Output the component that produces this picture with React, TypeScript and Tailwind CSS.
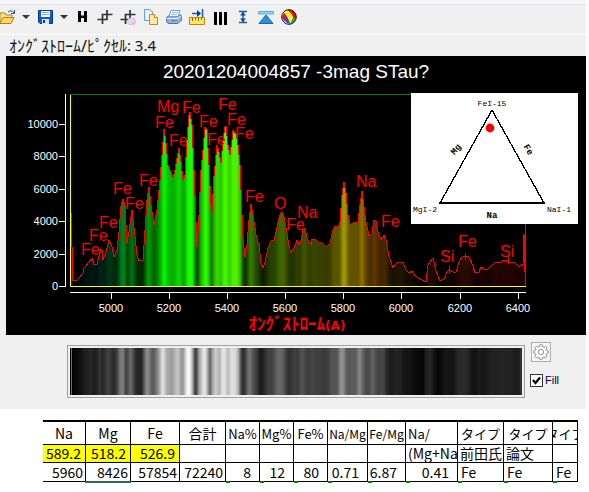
import type { ReactNode } from "react";

type Point = [number, number];

const BASELINE = 286;
const PEAK = 174;

const PROFILE: Point[] = [
  [71, 212], [72, 247], [73, 280], [77, 280], [80, 277], [83, 273], [84, 268], [86, 266], [89, 262],
  [92, 258], [94, 265], [97, 264], [99, 256], [101, 249], [102, 250], [103, 260], [106, 252], [109, 240],
  [112, 247], [114, 257], [117, 250], [119, 232], [121, 206], [123, 199], [125, 206], [127, 243],
  [129, 232], [132, 210], [134, 228], [137, 255], [139, 261], [143, 260], [145, 230], [147, 200],
  [149, 187], [151, 205], [154, 225], [157, 210], [160, 180], [162, 155], [164, 129], [166, 143],
  [168, 165], [171, 172], [173, 178], [175, 170], [177, 158], [179, 148], [181, 162], [183, 180],
  [185, 175], [187, 140], [189, 115], [190, 112], [192, 125], [194, 170], [197, 247], [199, 215],
  [201, 170], [203, 150], [205, 127], [207, 130], [209, 165], [211, 205], [212, 213], [214, 176],
  [217, 145], [219, 152], [221, 163], [223, 140], [225, 127], [226, 126], [228, 145], [230, 155],
  [232, 140], [233, 130], [235, 133], [237, 135], [239, 155], [240, 165], [241, 190], [242, 215],
  [243, 238], [245, 257], [247, 245], [249, 220], [251, 204], [253, 215], [256, 235], [259, 245],
  [261, 263], [263, 268], [265, 262], [268, 248], [271, 241], [274, 240], [276, 232], [278, 222],
  [280, 215], [282, 212], [284, 217], [286, 228], [289, 246], [291, 253], [294, 248], [297, 240],
  [299, 245], [301, 240], [303, 230], [305, 228], [307, 238], [310, 244], [312, 240], [315, 239],
  [318, 242], [322, 243], [326, 247], [330, 243], [333, 230], [335, 226], [338, 228], [340, 222],
  [342, 195], [344, 182], [346, 193], [348, 215], [350, 225], [355, 222], [358, 222], [360, 205],
  [362, 191], [364, 207], [366, 222], [369, 236], [372, 233], [374, 220], [376, 221], [378, 232],
  [381, 240], [384, 235], [386, 240], [389, 256], [393, 268], [396, 264], [398, 262], [403, 262],
  [406, 270], [409, 273], [412, 271], [415, 276], [420, 279], [426, 282], [428, 265], [430, 262],
  [433, 258], [436, 271], [440, 281], [444, 279], [447, 272], [449, 270], [453, 272], [456, 272],
  [459, 262], [462, 257], [466, 256], [469, 257], [473, 266], [475, 273], [479, 272], [481, 267],
  [484, 269], [487, 270], [490, 267], [495, 262], [500, 263], [504, 260], [509, 262], [512, 262],
  [515, 263], [519, 267], [523, 264], [524, 234], [525, 272],
];

// full-intensity colour of the spectrum at a given x
const HUES: [number, number, number, number][] = [
  [71, 0, 80, 90],
  [100, 0, 160, 110],
  [123, 0, 245, 45],
  [150, 0, 255, 5],
  [190, 20, 255, 0],
  [240, 85, 255, 0],
  [282, 140, 225, 0],
  [344, 255, 240, 0],
  [362, 245, 190, 0],
  [376, 225, 125, 0],
  [400, 200, 140, 0],
  [430, 160, 80, 0],
  [466, 220, 50, 0],
  [525, 220, 0, 0],
];

const level = (y: number) => Math.min(1, Math.max(0, (BASELINE - y) / PEAK));

const spectrumColor = ([x, y]: Point) => {
  const i = Math.max(0, HUES.findIndex((h, n) => n > 0 && x <= h[0]) - 1);
  const a = HUES[i];
  const b = HUES[i + 1];
  const t = (x - a[0]) / (b[0] - a[0]);
  const k = Math.min(1, level(y) * 1.08);
  const [r, g, bl] = [1, 2, 3].map((n) => Math.round((a[n] + (b[n] - a[n]) * t) * k));
  return `rgb(${r},${g},${bl})`;
};

const greyColor = ([x, y]: Point) => {
  const v = x < 76 ? 0 : Math.round(level(y) * 250);
  return `rgb(${v},${v},${v})`;
};

const LABELS: [string, number, number][] = [
  ["Fe", 81, 255], ["Fe", 89, 241], ["Fe", 99, 228], ["Fe", 125, 209], ["Fe", 113, 194], ["Fe", 139, 186],
  ["Mg", 157, 112], ["Fe", 182, 113], ["Fe", 155, 128], ["Fe", 169, 146], ["Fe", 199, 127], ["Fe", 207, 145],
  ["Fe", 218, 110], ["Fe", 227, 125], ["Fe", 235, 139], ["Fe", 245, 202], ["O", 274, 209], ["Na", 297, 218],
  ["Fe", 286, 230], ["Na", 356, 187], ["Fe", 381, 227], ["Si", 440, 262], ["Fe", 458, 247], ["Si", 500, 257],
];

const Y_TICKS: [string, number][] = [
  ["10000", 124], ["8000", 156], ["6000", 189], ["4000", 221], ["2000", 254], ["0", 286],
];

const X_TICKS: [string, number][] = [
  ["5000", 111], ["5200", 169], ["5400", 227], ["5600", 285],
  ["5800", 343], ["6000", 401], ["6200", 460], ["6400", 518],
];

const Stops = ({ color }: { color: (p: Point) => string }) => (
  <>
    {PROFILE.map((p) => (
      <stop key={p[0]} offset={(p[0] - 71) / 454} stopColor={color(p)} />
    ))}
  </>
);

const Ternary = () => (
  <g className="font-['Liberation_Mono',monospace] text-[8px]">
    <rect x="411" y="93" width="167" height="131" fill="#fff" />
    <g stroke="#000" fill="none" shapeRendering="crispEdges">
      <path d="M492 110L440 203M492 110L544 203" strokeWidth="1.3" />
      <path d="M439 203H545" strokeWidth="2" />
    </g>
    <circle cx="490" cy="128" r="4.4" fill="red" />
    <text x="492" y="106" textAnchor="middle">FeI-15</text>
    <text x="413" y="212">MgI-2</text>
    <text x="547" y="212">NaI-1</text>
    <g className="text-[9px] font-bold" textAnchor="middle">
      <text transform="translate(458 151) rotate(-50)">Mg</text>
      <text transform="translate(526 151) rotate(60)">Fe</text>
      <text x="492" y="218">Na</text>
    </g>
  </g>
);

const SpectrumChart = () => (
  <svg
    viewBox="6 56 580 279"
    className="block w-full bg-black font-['Liberation_Sans',sans-serif]"
    role="img"
    aria-label="20201204004857 -3mag STau?"
  >
    <defs>
      <linearGradient id="spectrum" gradientUnits="userSpaceOnUse" x1="71" x2="525" y1="0" y2="0">
        <Stops color={spectrumColor} />
      </linearGradient>
    </defs>

    <text x="296" y="78" textAnchor="middle" fill="#fff" className="text-[19px]">
      20201204004857 -3mag STau?
    </text>

    <path d={`M71 286L${PROFILE.map((p) => p.join(" ")).join("L")}V286Z`} fill="url(#spectrum)" />
    <path d="M70 94.5H525.5V286" stroke="#008000" fill="none" />
    <path
      d={`M${PROFILE.map((p) => p.join(" ")).join("L")}`}
      stroke="red"
      strokeWidth="1"
      fill="none"
      shapeRendering="crispEdges"
    />
    <path d="M311.5 239V246M449.5 266V274M465.5 253V260M508.5 257V264" stroke="red" />
    <path d="M70.5 95V286.5H526" stroke="#ff0" fill="none" />

    <g fill="red" className="text-[16px]">
      {LABELS.map(([name, x, y]) => (
        <text key={`${x}-${y}`} x={x} y={y}>{name}</text>
      ))}
    </g>

    <g stroke="#fff">
      <path d="M65.5 94V287M70 292.5H526" />
      {Y_TICKS.map(([, y]) => <path key={y} d={`M59 ${y + 0.5}H65`} />)}
      {X_TICKS.map(([, x]) => <path key={x} d={`M${x + 0.5} 293V299`} />)}
    </g>
    <g fill="#fff" className="text-[11px]">
      {Y_TICKS.map(([t, y]) => (
        <text key={t} x="58" y={y + 4} textAnchor="end">{t}</text>
      ))}
      {X_TICKS.map(([t, x]) => (
        <text key={t} x={x} y="312" textAnchor="middle">{t}</text>
      ))}
    </g>
    <text x="297" y="330" textAnchor="middle" fill="red" className="font-['Noto_Sans_CJK_JP',sans-serif] text-[17px] font-bold">
      ｵﾝｸﾞｽﾄﾛｰﾑ<tspan className="font-['DejaVu_Sans',sans-serif] text-[12px]">(A)</tspan>
    </text>

    <Ternary />
  </svg>
);

const GreyStrip = () => (
  <div className="flex-1 border border-[#a0a0a0] p-0.5">
    <svg viewBox="71 0 454 47" preserveAspectRatio="none" className="block h-[47px] w-full">
      <defs>
        <linearGradient id="grey" gradientUnits="userSpaceOnUse" x1="71" x2="525" y1="0" y2="0">
          <Stops color={greyColor} />
        </linearGradient>
      </defs>
      <rect x="71" width="454" height="47" fill="url(#grey)" />
      <path d="M72.5 0V47" stroke="#6a7070" />
    </svg>
  </div>
);

const Icon = ({ children }: { children: ReactNode }) => (
  <svg viewBox="0 0 16 16" className="size-4 shrink-0" fill="none">{children}</svg>
);

const ToolButton = ({ label, width = "w-[23px]", children }: { label: string; width?: string; children: ReactNode }) => (
  <button type="button" aria-label={label} className={`flex h-6 shrink-0 items-center ${width}`}>
    {children}
  </button>
);

const Caret = () => (
  <svg viewBox="0 0 8 4" className="h-1 w-2" fill="#333"><path d="M0 0H8L4 4Z" /></svg>
);

const CropMarks = () => (
  <path d="M5.500 15V5.500H15.500M.5 10.500H10V1" stroke="#333" strokeWidth="1.700" />
);

const Toolbar = () => (
  <div className="flex h-[30px] items-start border-b border-white">
    <ToolButton label="Open" width="w-[22px]">
      <Icon>
        <path d="M0 14V4h5l1 2h6v3" fill="#ffe9a0" stroke="#b07d10" />
        <path d="M0 14.500L3 8.500H14L11 14.500Z" fill="#ffd76a" stroke="#b07d10" />
        <path d="M8 3Q11 0 14 4M14.500 1V4.500H11" stroke="#2456a8" />
      </Icon>
    </ToolButton>
    <ToolButton label="Open recent" width="w-4"><Caret /></ToolButton>
    <ToolButton label="Save" width="w-[22px]">
      <Icon>
        <path d="M.5 1.500H14.500V14.500H2L.5 13Z" fill="#1457c8" stroke="#08379a" />
        <path d="M3 2H12V8H3Z" fill="#fff" />
        <path d="M4 3.500H11M4 5.500H11" stroke="#7aa7df" />
        <path d="M4 10H11V15H4Z" fill="#d8e6f5" />
        <path d="M5 11H7V14H5Z" fill="#08379a" />
      </Icon>
    </ToolButton>
    <ToolButton label="Save options" width="w-[14px]"><Caret /></ToolButton>
    <ToolButton label="Header">
      <Icon><path d="M4 2H7V6.500H10V2H13V13H10V9H7V13H4Z" fill="#000" /></Icon>
    </ToolButton>
    <ToolButton label="Crop"><Icon><CropMarks /></Icon></ToolButton>
    <ToolButton label="Crop area">
      <Icon>
        <CropMarks />
        <ellipse cx="11.500" cy="12.500" rx="4" ry="3.500" fill="#e6d8f4" stroke="#b9c6de" />
        <circle cx="13.500" cy="14" r="1.500" fill="#f7a6e6" />
      </Icon>
    </ToolButton>
    <ToolButton label="Copy">
      <Icon>
        <path d="M1.500 .5H7L9.500 3V11.500H1.500Z" fill="#eaf4ff" stroke="#5f9ddb" />
        <path d="M6.500 5.500H11.500L14.500 8.500V15.500H6.500Z" fill="#ffe9a0" stroke="#c08a1a" />
        <path d="M11.500 5.500V8.500H14.500" fill="#fff" stroke="#c08a1a" />
      </Icon>
    </ToolButton>
    <ToolButton label="Print">
      <Icon>
        <path d="M1 8L4 6H15L15.500 11L12 14.500H2L.5 12Z" fill="#8fb0d8" stroke="#4a76b4" />
        <path d="M5 1.500H14L12 7.500H3Z" fill="#fff" stroke="#6f9fd0" />
        <path d="M6 3.500H12M5 5.500H11" stroke="#8fc4f0" />
        <path d="M1 9.500H12L15 7" stroke="#e6effa" />
        <path d="M6 11.500H8" stroke="#e02020" />
        <path d="M9 11.500H11" stroke="#20b040" />
      </Icon>
    </ToolButton>
    <ToolButton label="Measure">
      <Icon>
        <path d="M.5 8.500H15.500V15.500H.5Z" fill="#ffe566" stroke="#b8860b" />
        <path d="M3.500 9V12M6.500 9V11M9.500 9V12M12.500 9V11" stroke="#8a6500" />
        <path d="M3 4.500H11M13.500 0V8" stroke="#1457c8" strokeWidth="1.500" />
        <path d="M8 1L12 4.500L8 8Z" fill="#08379a" />
      </Icon>
    </ToolButton>
    <ToolButton label="Lines">
      <Icon><path d="M3.500 3V16M8.500 3V16M13.500 3V16" stroke="#000" strokeWidth="3" /></Icon>
    </ToolButton>
    <ToolButton label="Height">
      <Icon>
        <path d="M4 2.500H12M4 13.500H12M8 3V13" stroke="#1f5a9c" strokeWidth="1.500" />
        <path d="M8 3L11 6.500H5ZM8 13L11 9.500H5Z" fill="#08479a" />
      </Icon>
    </ToolButton>
    <ToolButton label="Level">
      <Icon>
        <path d="M.5 2.500H15.500V5H.5Z" fill="#8fdcf5" stroke="#58a8d8" />
        <path d="M8 6L15 14.500H1Z" fill="#2a90d8" stroke="#1268b0" />
      </Icon>
    </ToolButton>
    <ToolButton label="Colours">
      <Icon>
        <circle cx="8" cy="8" r="7.500" fill="#fff" />
        <path d="M6 1Q11 4 12 9L15 9Q16 2 8 .5Z" fill="#e81010" />
        <path d="M6 1Q11 4 12 9L9 15Q8 9 3 4Z" fill="#ffee20" />
        <path d="M3 4Q8 9 9 15Q4 14 2 9Z" fill="#2050f0" />
        <path d="M1 8L3 4Q5 6 6 8L3 12Z" fill="#e81010" />
        <path d="M12 9L15 9Q14 14 9 15Z" fill="#10b820" />
        <circle cx="8" cy="8" r="7.300" stroke="#111" />
      </Icon>
    </ToolButton>
  </div>
);

const Gear = () => (
  <svg viewBox="0 0 16 16" className="size-4 shrink-0" fill="#fff" stroke="#8a9199">
    <path d="M6.800 .8H9.200L9.700 2.700L11.200 3.300L12.800 2.300L14 3.700L13 5.300L13.600 6.600L15.200 7V9L13.600 9.500L13 10.900L14 12.500L12.500 13.900L11 13L9.700 13.500L9.200 15.200H6.800L6.300 13.500L5 13L3.400 13.900L2 12.500L3 10.900L2.400 9.500L.8 9V7L2.400 6.600L3 5.200L2 3.700L3.400 2.300L5 3.200L6.300 2.700Z" />
    <circle cx="8" cy="8" r="2.700" />
  </svg>
);

const COLUMNS = [
  "w-[43px]", "w-[45px]", "w-[49px]", "w-[46px]", "w-[34px]", "w-[34px]", "w-[34px]",
  "w-[40px]", "w-[38px]", "w-[52px]", "w-[46px]", "w-[49px]", "w-[25px]",
];

const HEADERS = ["Na", "Mg", "Fe", "合計", "Na%", "Mg%", "Fe%", "Na/Mg", "Fe/Mg", "Na/", "タイプ", "タイプ", "タイプ"];
const LINES = ["589.2", "518.2", "526.9", "", "", "", "", "", "", "(Mg+Na", "前田氏", "論文", ""];
const VALUES = ["5960", "8426", "57854", "72240", "8", "12", "80", "0.71", "6.87", "0.41", "Fe", "Fe", "Fe"];

const valueAlign = (i: number) => {
  if (i < 4) return "justify-end pr-0.5";
  if (i < 10) return "justify-end pr-2";
  return "justify-start pl-[3px]";
};

const RatioTable = () => (
  <div className="pt-[11px] pr-2 pl-[43px]">
    <table className="w-full table-fixed border-separate border-spacing-0 border-t-2 border-black font-['Noto_Sans_CJK_JP',sans-serif] text-[14px] leading-[17px] whitespace-nowrap text-black">
      <colgroup>
        {COLUMNS.map((w, i) => <col key={i} className={w} />)}
      </colgroup>
      <thead>
        <tr>
          {HEADERS.map((h, i) => (
            <th key={i} className="border-r border-b border-black p-0 font-normal">
              <div className={`flex h-[22px] items-center overflow-hidden ${i === 9 ? "pl-0.5" : "justify-center"} ${i === 7 || i === 8 ? "text-[12px]" : i > 3 ? "text-[13px]" : ""}`}>
                {h}
              </div>
            </th>
          ))}
        </tr>
      </thead>
      <tbody>
        <tr>
          {LINES.map((v, i) => (
            <td key={i} className={`border-r border-b border-black p-0 ${i < 3 ? "bg-[#ffff00]" : ""}`}>
              <div className={`flex h-[17px] items-center overflow-hidden ${i < 3 ? "justify-end pr-1" : "pl-0.5"}`}>
                {v}
              </div>
            </td>
          ))}
        </tr>
        <tr>
          {VALUES.map((v, i) => (
            <td key={i} className="relative border-r border-b border-black p-0">
              <div className={`flex h-[18px] items-center overflow-hidden ${valueAlign(i)}`}>{v}</div>
              {i === 1 && <span className="absolute -right-px -bottom-0.5 -left-px h-0.5 bg-[#217346]" />}
              {i > 3 && <span className="absolute -bottom-0.5 left-0 h-0.5 w-1 bg-[#008000]" />}
            </td>
          ))}
        </tr>
      </tbody>
    </table>
  </div>
);

const App = () => (
  <div className="bg-white pr-[3px] pb-2">
    <div className="bg-[#f0f0f0] pb-[11px]">
      <div className="h-[5px] border-b border-[#e3e5e8] bg-[#f4f6f9]" />
      <Toolbar />
      <p className="flex h-[21px] items-center pl-[9px] font-['Noto_Sans','Noto_Sans_CJK_JP',sans-serif] text-[15px] text-[#111]">
        <span className="text-[16px]">ｵﾝｸﾞｽﾄﾛｰﾑ/ﾋﾟｸｾﾙ</span>: 3.4
      </p>
      <div className="pl-1.5">
        <SpectrumChart />
      </div>
      <div className="flex items-start pt-[7px] pl-[67px]">
        <div className="flex flex-1 pt-[3px]">
          <GreyStrip />
        </div>
        <div className="flex w-[61px] flex-col items-start gap-3 pl-[5px]">
          <button
            type="button"
            aria-label="Settings"
            className="ml-px flex size-5 items-center justify-center border border-[#adadad] bg-[#f4f4f4]"
          >
            <Gear />
          </button>
          <label className="relative flex items-center gap-0.5 font-['Liberation_Sans',sans-serif] text-[11px] leading-[13px] text-[#000050]">
            <input type="checkbox" defaultChecked className="peer size-[13px] appearance-none border border-[#333] bg-white" />
            <svg viewBox="0 0 13 13" className="pointer-events-none absolute top-0 left-0 hidden size-[13px] peer-checked:block" fill="none">
              <path d="M3 6L5.500 9L10 3.500" stroke="#000" strokeWidth="2.200" />
            </svg>
            Fill
          </label>
        </div>
      </div>
    </div>
    <RatioTable />
  </div>
);

export default App;
